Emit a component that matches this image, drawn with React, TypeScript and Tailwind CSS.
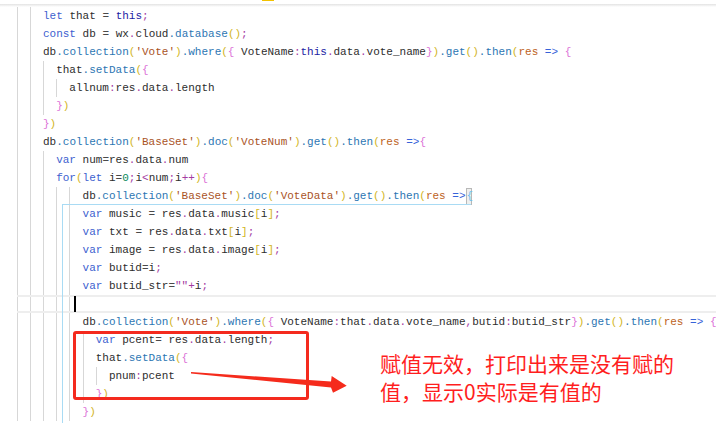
import React from 'react';

// ── Code lines ────────────────────────────────────────────────────────────────

interface Line {
  indent: number; // in columns, 2 per guide
  text: string;
  boxLast?: boolean; // bracket-match box round the last char
  current?: boolean; // line with the cursor
}

const LINES: Line[] = [
  { indent: 4, text: 'let that = this;' },
  { indent: 4, text: 'const db = wx.cloud.database();' },
  { indent: 4, text: "db.collection('Vote').where({ VoteName:this.data.vote_name}).get().then(res => {" },
  { indent: 6, text: 'that.setData({' },
  { indent: 8, text: 'allnum:res.data.length' },
  { indent: 6, text: '})' },
  { indent: 4, text: '})' },
  { indent: 4, text: "db.collection('BaseSet').doc('VoteNum').get().then(res =>{" },
  { indent: 6, text: 'var num=res.data.num' },
  { indent: 6, text: 'for(let i=0;i<num;i++){' },
  { indent: 10, text: "db.collection('BaseSet').doc('VoteData').get().then(res =>{", boxLast: true },
  { indent: 10, text: 'var music = res.data.music[i];' },
  { indent: 10, text: 'var txt = res.data.txt[i];' },
  { indent: 10, text: 'var image = res.data.image[i];' },
  { indent: 10, text: 'var butid=i;' },
  { indent: 10, text: 'var butid_str=""+i;' },
  { indent: 10, text: '', current: true },
  { indent: 10, text: "db.collection('Vote').where({ VoteName:that.data.vote_name,butid:butid_str}).get().then(res => {" },
  { indent: 12, text: 'var pcent= res.data.length;' },
  { indent: 12, text: 'that.setData({' },
  { indent: 14, text: 'pnum:pcent' },
  { indent: 12, text: '})' },
  { indent: 10, text: '})' },
];

// ── Token colours ─────────────────────────────────────────────────────────────

const C = {
  kw: 'text-[#3d5fcf]',
  th: 'text-[#1c22a3]',
  id: 'text-[#2d2d2d]',
  fn: 'text-[#2c76b3]',
  st: 'text-[#a9531f]',
  pa: 'text-[#bd621c]',
  pu: 'text-[#a43aa2]',
  op: 'text-[#4a4a4a]',
  ar: 'text-[#3763d9]',
  nu: 'text-[#0b8a5b]',
  gold: 'text-[#d2b524]',
  orchid: 'text-[#dc72d7]',
  sky: 'text-[#6fc0f0]',
};

const KW = new Set(['let', 'const', 'var', 'for']);

interface Tok { t: string; c: string }

const tokenize = (s: string): Tok[] => {
  const re = /('[^']*'|"[^"]*")|(\d+)|([A-Za-z_$][\w$]*)|(=>)|(\s+)|([(){}[\]])|(.)/g;
  const m = [...s.matchAll(re)].map(x => x[0]);
  return m.map((t, i) => {
    const next = m[i + 1];
    const next2 = m[i + 2];
    const nextSolid = m.slice(i + 1).find(x => !/^\s+$/.test(x));
    let c = C.id;
    if (/^['"]/.test(t)) c = t === '""' ? C.pu : C.st;
    else if (/^\d/.test(t)) c = C.nu;
    else if (/^[A-Za-z_$]/.test(t)) {
      if (KW.has(t)) c = C.kw;
      else if (t === 'this') c = C.th;
      else if (t === 'res' && nextSolid === '=>') c = C.pa;
      else if (next === '(') c = C.fn;
    } else if (t === '=>') c = C.ar;
    else if (/^\s/.test(t)) c = '';
    else if ('()[]'.includes(t)) c = C.gold;
    else if ('{}'.includes(t)) c = C.orchid;
    else if (t === '.') c = next2 === '(' ? C.fn : C.pu;
    else if (t === '=') c = C.op;
    else c = C.pu;
    return { t, c };
  });
};

// ── Pieces ────────────────────────────────────────────────────────────────────

const CodeLine: React.FC<{ line: Line }> = ({ line }) => {
  const toks = tokenize(line.text);
  const n = line.indent / 2;
  const units = Array.from({ length: n });
  return (
    <div
      className={`flex h-[18px] items-stretch whitespace-pre ${
        line.current ? 'border-y-2 border-[#eeeeee]' : ''
      }`}
    >
      {units.map((_, i) => (
        <span key={i} className="flex w-[13.2px] shrink-0 border-l border-[#d7d7d7]">
          {line.current && i === n - 1 && <span className="-my-px ml-[3.6px] w-[2px] bg-black" />}
        </span>
      ))}
      <span className="leading-[18px]">
        {toks.map((k, i) =>
          line.boxLast && i === toks.length - 1 ? (
            <span
              key={i}
              className="inline-block h-[17px] w-[6.6px] border border-[#b8b8b8] bg-[#eef0ee] text-center leading-[15px] text-[#6fc0f0]"
            >
              {k.t}
            </span>
          ) : (
            <span key={i} className={k.c}>{k.t}</span>
          )
        )}
      </span>
    </div>
  );
};

const Arrow = () => (
  <svg
    className="absolute left-[185px] top-[368px]"
    width="165"
    height="30"
    viewBox="0 0 165 30"
  >
    <polygon
      points="6,4 146,13.5 146.7,8 161.7,17.7 148,24.7 146,19.5 6,5.6"
      fill="#f52b1c"
    />
  </svg>
);

// ── Main ──────────────────────────────────────────────────────────────────────

export default function App() {
  return (
    <div className="relative h-[423px] w-[716px] overflow-hidden bg-white font-['Liberation_Mono',monospace] text-[11px]">
      {/* breadcrumb remnant + scroll shadow */}
      <div className="flex h-[4px] pl-[262px]">
        <span className="h-px w-[12px] bg-[#f2c200]" />
      </div>
      <div className="h-[3px] bg-gradient-to-b from-[#e3e3e3] to-white" />

      {/* editor lines */}
      <div className="ml-[16.6px] flex flex-col">
        {LINES.map((l, i) => (
          <CodeLine key={i} line={l} />
        ))}
      </div>

      {/* bracket pair guide (editor decoration over the text) */}
      <div className="absolute left-[62px] top-[204px] h-px w-[409px] bg-[#a9dbf4]" />
      <div className="absolute bottom-0 left-[62px] top-[204px] w-px bg-[#a9dbf4]" />

      {/* annotation drawn over the screenshot */}
      <div className="absolute left-[73px] top-[331px] h-[69px] w-[236px] rounded-[3px] border-[3px] border-[#f42a1e]" />
      <Arrow />
      <div className="absolute left-[380px] top-[349px] whitespace-nowrap font-['Noto_Sans_CJK_SC',sans-serif] text-[21px] leading-[28px] text-[#ff1e1e]">
        <div>赋值无效，打印出来是没有赋的</div>
        <div>值，显示0实际是有值的</div>
      </div>
    </div>
  );
}
